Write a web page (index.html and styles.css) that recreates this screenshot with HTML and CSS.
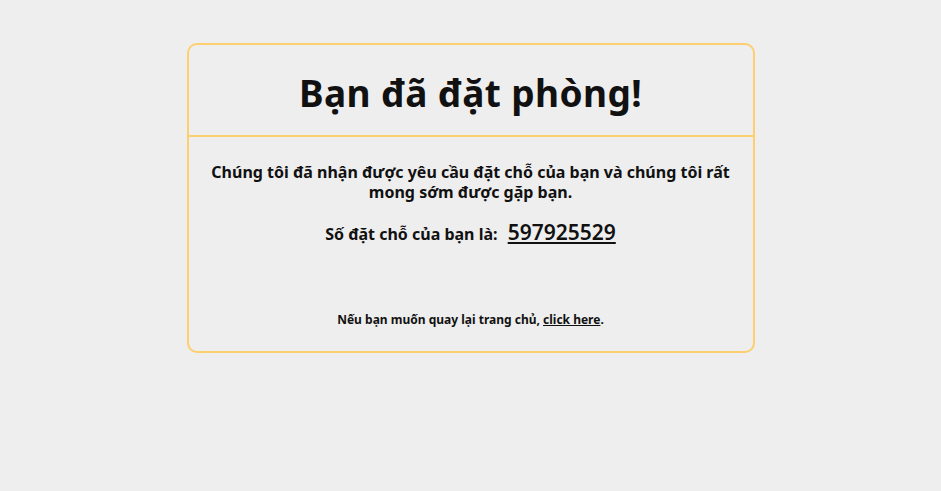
FILE: index.html
```html
<!DOCTYPE html>
<html lang="vi">
<head>
<meta charset="utf-8">
<title>Đặt phòng</title>
<link rel="stylesheet" href="styles.css">
</head>
<body>
<div class="card">
  <div class="card-header">
    <h1 class="title">Bạn đã đặt phòng!</h1>
  </div>
  <div class="card-body">
    <p class="message">Chúng tôi đã nhận được yêu cầu đặt chỗ của bạn và chúng tôi rất mong sớm được gặp bạn.</p>
    <p class="booking">Số đặt chỗ của bạn là: <span class="booking-number">597925529</span></p>
    <p class="footer-note">Nếu bạn muốn quay lại trang chủ, <a href="#" class="home-link">click here</a>.</p>
  </div>
</div>
</body>
</html>
```
FILE: styles.css
```css
html, body {
  margin: 0;
  padding: 0;
  background: #eeeeee;
}
body {
  font-family: "Noto Sans", "Open Sans", sans-serif;
  color: #111;
}
.card {
  box-sizing: border-box;
  width: 568px;
  margin: 43px auto 0;
  border: 2px solid #fdcf6e;
  border-radius: 10px;
}
.card-header {
  box-sizing: border-box;
  height: 92px;
  padding-top: 4px;
  display: flex;
  align-items: center;
  justify-content: center;
  border-bottom: 2px solid #fdcf6e;
}
.title {
  margin: 0;
  font-size: 37px;
  font-weight: 700;
  letter-spacing: 0.4px;
}
.card-body {
  padding: 25px 10px 22px;
  text-align: center;
}
.message {
  margin: 0;
  font-size: 16px;
  font-weight: 700;
  line-height: 20px;
}
.booking {
  margin: 18px 0 0;
  font-size: 16px;
  font-weight: 700;
  line-height: 24px;
}
.booking-number {
  font-size: 21px;
  font-weight: 600;
  text-decoration: underline;
  margin-left: 6px;
}
.footer-note {
  margin: 65px 0 0;
  font-size: 12px;
  font-weight: 700;
  line-height: 18px;
}
.home-link {
  color: #111;
  text-decoration: underline;
}
```
